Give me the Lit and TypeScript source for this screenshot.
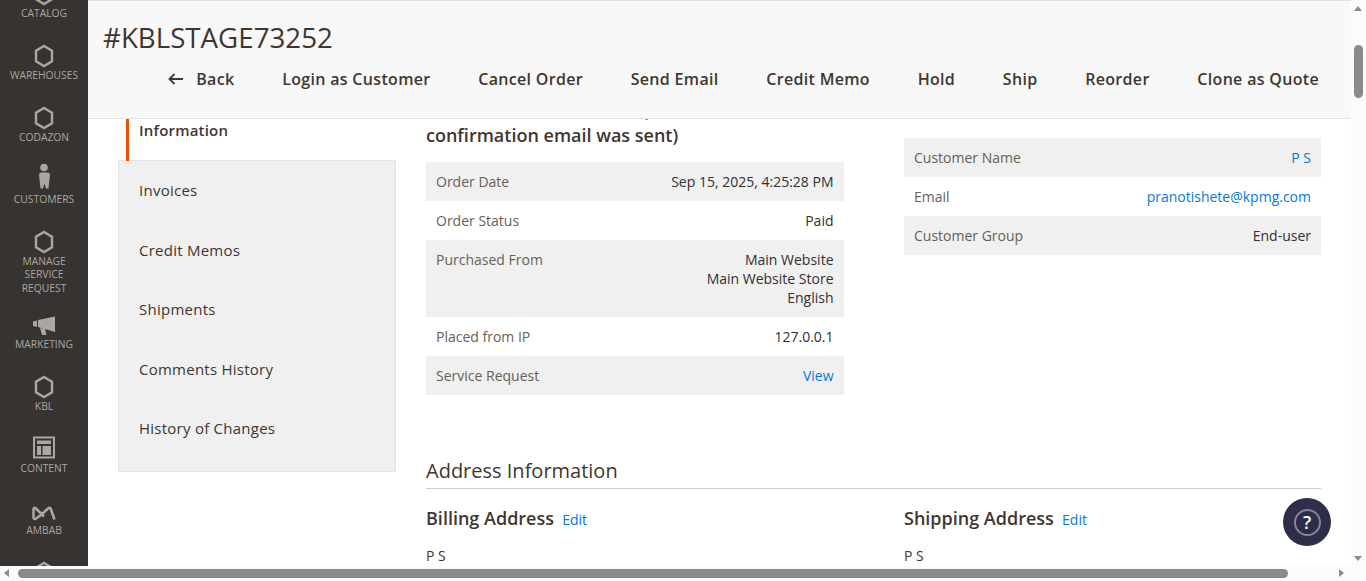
import { LitElement, css, html, svg } from "lit";
import { customElement } from "lit/decorators.js";

const hex = svg`<polygon points="12,2 20,6.75 20,17.25 12,22 4,17.25 4,6.75" fill="none" stroke="currentColor" stroke-width="2.4" />`;
const person = svg`<circle cx="12" cy="-0.5" r="3.8" fill="currentColor" /><path d="M8 4.500h8q2 0 2 2.500l-.8 7-.7 6.500h-2.500l-1.500-5-1.500 5H8.500l-.7-6.500-.8-7q0-2.500 2-2.500z" fill="currentColor" />`;
const megaphone = svg`<path d="M1 8.500L5 7.500V14L1 13zM6 7L23 3.500V19L6 14zM8 15l5 1 1.500 6H10z" fill="currentColor" />`;
const content = svg`<rect x="2" y="0.500" width="20" height="20" fill="none" stroke="currentColor" stroke-width="2" /><path d="M5 3.500h14V7H5zM5 9h4v9H5zM10.500 9H19v9h-8.500z" fill="currentColor" />`;
const ambab = svg`<path d="M12 17.500L4 9.500Q1.500 7.500 1.500 11V18Q1.500 21 4 19.500L9 16 16 9.500Q18 7.500 19 10.500L22.500 20.500" fill="none" stroke="currentColor" stroke-width="2.600" />`;

const navItems = [
  { label: "CATALOG", icon: hex },
  { label: "WAREHOUSES", icon: hex },
  { label: "CODAZON", icon: hex },
  { label: "CUSTOMERS", icon: person },
  { label: "MANAGE SERVICE REQUEST", icon: hex, tall: true },
  { label: "MARKETING", icon: megaphone },
  { label: "KBL", icon: hex },
  { label: "CONTENT", icon: content },
  { label: "AMBAB", icon: ambab },
  { label: "", icon: hex },
];

const actions = [
  "Login as Customer",
  "Cancel Order",
  "Send Email",
  "Credit Memo",
  "Hold",
  "Ship",
  "Reorder",
  "Clone as Quote",
];

const tabs = [
  "Invoices",
  "Credit Memos",
  "Shipments",
  "Comments History",
  "History of Changes",
];

@customElement("app-root")
export class AppRoot extends LitElement {
  static styles = css`
    :host {
      display: block;
      position: relative;
      width: 1366px;
      height: 581px;
      overflow: hidden;
      background: #fff;
      font-family: "Open Sans", sans-serif;
      color: #41362f;
    }

    .page {
      display: flex;
      height: 566px;
      width: 1351px;
    }

    .sidebar {
      flex: none;
      width: 88px;
      background: #373330;
      overflow: hidden;
      color: #aaa6a0;
    }

    .nav {
      margin-top: -18.5px;
    }

    .nav-item {
      height: 62px;
      display: flex;
      flex-direction: column;
      align-items: center;
    }

    .nav-item.tall {
      height: 83px;
    }

    .nav-item svg {
      flex: none;
      width: 24px;
      height: 24px;
      overflow: visible;
    }

    .nav-label {
      margin-top: 1px;
      width: 80px;
      font-size: 10.3px;
      line-height: 13.5px;
      text-align: center;
    }

    .main {
      flex: 1;
      min-width: 0;
      display: flex;
      flex-direction: column;
    }

    .header {
      flex: none;
      box-sizing: border-box;
      height: 119px;
      background: #f8f8f8;
      border-top: 1px solid #e3e3e3;
      border-bottom: 1px solid #e3e3e3;
      padding: 17px 32px 0 15px;
    }

    .title {
      margin: 0;
      font-size: 27.7px;
      line-height: 38px;
      font-weight: 400;
    }

    .actions {
      display: flex;
      justify-content: flex-end;
      align-items: center;
      gap: 47.7px;
      margin-top: 11px;
      font-size: 16px;
      line-height: 24px;
      font-weight: 600;
      letter-spacing: 0.32px;
    }

    .back {
      display: flex;
      align-items: center;
      gap: 13px;
    }

    .back svg {
      width: 15px;
      height: 12px;
    }

    .body {
      flex: 1;
      min-height: 0;
      overflow: hidden;
    }

    .body-inner {
      display: flex;
      margin-top: -21px;
      padding-left: 30px;
    }

    .tabs {
      flex: none;
      width: 278px;
      padding-top: 3px;
      font-size: 15px;
      letter-spacing: 0.25px;
    }

    .tab-active {
      position: relative;
      z-index: 1;
      box-sizing: border-box;
      height: 60px;
      margin: 0 0 -1px 8px;
      padding: 19px 0 0 10px;
      border-left: 3px solid #eb5202;
      font-weight: 600;
      line-height: 20px;
      letter-spacing: 0.2px;
    }

    .tab-list {
      box-sizing: border-box;
      height: 312px;
      background: #f0f0f0;
      border: 1px solid #e3e3e3;
      padding-left: 20px;
    }

    .tab {
      box-sizing: border-box;
      height: 59.5px;
      padding-bottom: 1px;
      display: flex;
      align-items: center;
    }

    .content {
      flex: none;
      width: 895px;
      margin-left: 30px;
    }

    .columns {
      display: grid;
      grid-template-columns: 417.5px 417px;
      column-gap: 60.5px;
    }

    .block-title {
      margin: 0 0 13.5px;
      font-size: 18px;
      line-height: 25px;
      font-weight: 600;
    }

    .right-column {
      padding-top: 40px;
    }

    .row {
      display: flex;
      justify-content: space-between;
      padding: 10px;
      font-size: 14px;
      line-height: 19px;
      color: #303030;
    }

    .row:nth-child(odd) {
      background: #f0f0f0;
    }

    .row-label {
      color: #676056;
    }

    .row-value {
      text-align: right;
    }

    a {
      color: #007bdb;
      text-decoration: none;
    }

    .section-title {
      margin: 63px 0 0;
      padding-bottom: 4px;
      border-bottom: 1px solid #cccccc;
      font-size: 20px;
      line-height: 26px;
      font-weight: 400;
    }

    .address {
      margin-top: 17px;
    }

    .address-title {
      font-size: 18px;
      line-height: 25px;
      font-weight: 600;
    }

    .address-title a {
      margin-left: 3.5px;
      font-size: 14px;
      font-weight: 400;
    }

    .address-line {
      margin-top: 14px;
      font-size: 14px;
      line-height: 19px;
    }

    .help {
      position: absolute;
      left: 1283px;
      top: 498px;
      width: 48px;
      height: 48px;
      border-radius: 50%;
      background: #2d2f4a;
      display: flex;
      align-items: center;
      justify-content: center;
    }

    .help-ring {
      box-sizing: border-box;
      width: 27px;
      height: 27px;
      border: 2px solid #858695;
      border-radius: 50%;
      display: flex;
      align-items: center;
      justify-content: center;
      color: #fff;
      font-size: 18px;
      line-height: 18px;
      font-weight: 600;
    }

    .sb-v,
    .sb-h {
      position: absolute;
      background: #fbfbfb;
    }

    .sb-v {
      right: 0;
      top: 0;
      width: 15px;
      height: 566px;
    }

    .sb-h {
      left: 0;
      top: 566px;
      width: 1366px;
      height: 15px;
    }

    .thumb {
      position: absolute;
      background: #8a8a8a;
      border-radius: 5px;
    }

    .sb-v .thumb {
      left: 3px;
      top: 45px;
      width: 9px;
      height: 53px;
    }

    .sb-h .thumb {
      left: 18px;
      top: 3px;
      width: 1270px;
      height: 9px;
    }

    .arrow {
      position: absolute;
      width: 0;
      height: 0;
      border: solid transparent;
    }

    .arrow.up {
      left: 3px;
      top: 6px;
      border-width: 0 4.5px 5px;
      border-bottom-color: #8a8a8a;
    }

    .arrow.down {
      left: 3px;
      bottom: 5px;
      border-width: 5px 4.5px 0;
      border-top-color: #8a8a8a;
    }

    .arrow.left {
      left: 4px;
      top: 3px;
      border-width: 4.5px 5px 4.5px 0;
      border-right-color: #8a8a8a;
    }

    .arrow.right {
      left: 1339px;
      top: 3px;
      border-width: 4.5px 0 4.5px 5px;
      border-left-color: #8a8a8a;
    }
  `;

  render() {
    return html`
      <div class="page">
        <aside class="sidebar">
          <div class="nav">
            ${navItems.map(
              (item) => html`<div class="nav-item ${item.tall ? "tall" : ""}">
                <svg viewBox="0 0 24 24">${item.icon}</svg>
                <div class="nav-label">${item.label}</div>
              </div>`
            )}
          </div>
        </aside>
        <div class="main">
          <header class="header">
            <h1 class="title">#KBLSTAGE73252</h1>
            <div class="actions">
              <div class="back">
                <svg viewBox="0 0 15 12">
                  <path
                    d="M6.5 1L1.5 6l5 5M1.5 6H15"
                    fill="none"
                    stroke="currentColor"
                    stroke-width="1.8"
                  />
                </svg>
                Back
              </div>
              ${actions.map((a) => html`<div>${a}</div>`)}
            </div>
          </header>
          <div class="body">
            <div class="body-inner">
              <div class="tabs">
                <div class="tab-active">Information</div>
                <div class="tab-list">
                  ${tabs.map((t) => html`<div class="tab">${t}</div>`)}
                </div>
              </div>
              <div class="content">
                <div class="columns">
                  <div>
                    <h2 class="block-title">
                      Order # KBLSTAGE73252 (The order confirmation email was
                      sent)
                    </h2>
                    <div>
                      ${this.row("Order Date", "Sep 15, 2025, 4:25:28 PM")}
                      ${this.row("Order Status", "Paid")}
                      ${this.row(
                        "Purchased From",
                        html`Main Website<br />Main Website Store<br />English`
                      )}
                      ${this.row("Placed from IP", "127.0.0.1")}
                      ${this.row("Service Request", html`<a>View</a>`)}
                    </div>
                  </div>
                  <div class="right-column">
                    ${this.row("Customer Name", html`<a>P S</a>`)}
                    ${this.row("Email", html`<a>pranotishete@kpmg.com</a>`)}
                    ${this.row("Customer Group", "End-user")}
                  </div>
                </div>
                <h2 class="section-title">Address Information</h2>
                <div class="columns address">
                  <div>
                    <div class="address-title">
                      Billing Address <a>Edit</a>
                    </div>
                    <div class="address-line">P S</div>
                  </div>
                  <div>
                    <div class="address-title">
                      Shipping Address <a>Edit</a>
                    </div>
                    <div class="address-line">P S</div>
                  </div>
                </div>
              </div>
            </div>
          </div>
        </div>
      </div>
      <div class="help"><div class="help-ring">?</div></div>
      <div class="sb-v">
        <div class="arrow up"></div>
        <div class="thumb"></div>
        <div class="arrow down"></div>
      </div>
      <div class="sb-h">
        <div class="arrow left"></div>
        <div class="thumb"></div>
        <div class="arrow right"></div>
      </div>
    `;
  }

  private row(label: string, value: unknown) {
    return html`<div class="row">
      <div class="row-label">${label}</div>
      <div class="row-value">${value}</div>
    </div>`;
  }
}
